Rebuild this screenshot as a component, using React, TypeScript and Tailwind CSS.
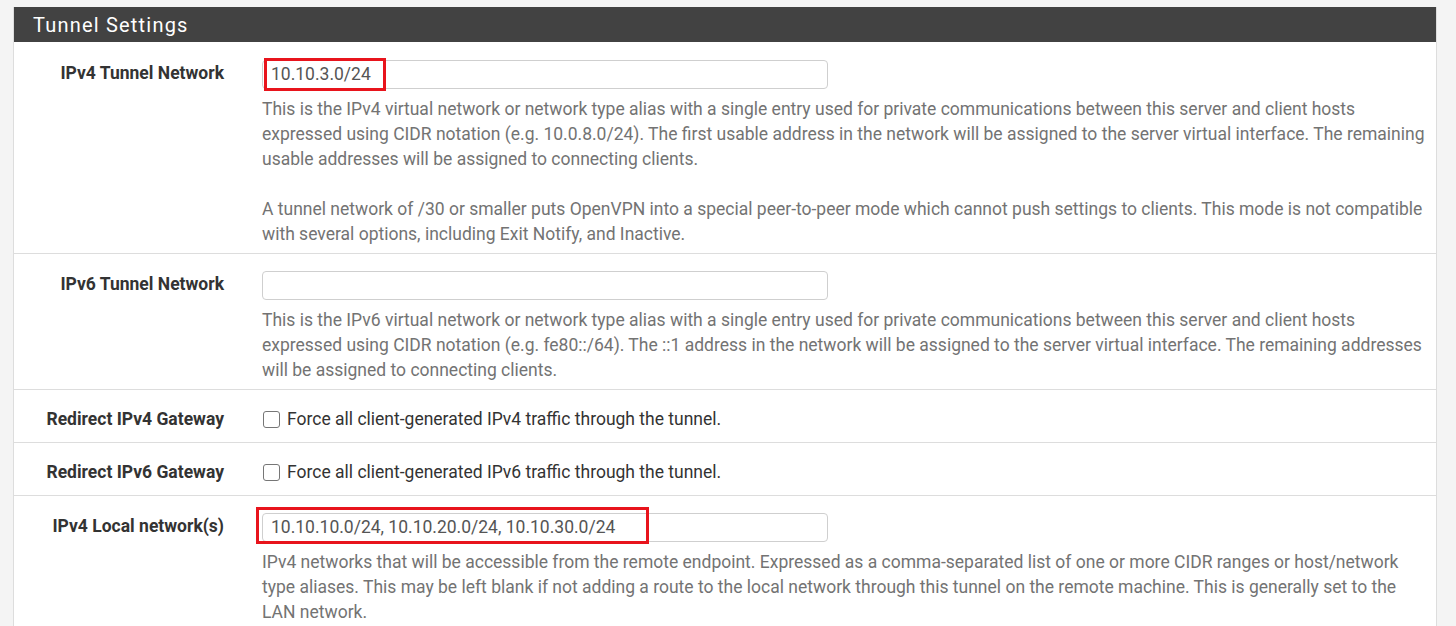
const font = { fontFamily: "Roboto, 'Liberation Sans', sans-serif" };

function Label({ children }: { children: React.ReactNode }) {
  return (
    <div className="w-[225px] shrink-0 pr-[15px] pt-[1px] text-right text-[17.5px] font-bold leading-[25px] text-[#333]">
      {children}
    </div>
  );
}

function TextInput({ value }: { value?: string }) {
  return (
    <div className="flex h-[29px] w-[566px] items-center rounded-[4px] border border-[#cfcfcf] bg-white pl-[8px] text-[17.5px] text-[#555]">
      {value}
    </div>
  );
}

function Help({ children }: { children: React.ReactNode }) {
  return <div className="mt-[8px] text-[17.5px] leading-[25px] text-[#737373]">{children}</div>;
}

function CheckRow({ label, text }: { label: string; text: string }) {
  return (
    <div className="flex border-t border-[#ddd] pt-[16px] pb-[10px]">
      <Label>{label}</Label>
      <div className="flex items-center pl-[23px] pt-[1px] text-[17.5px] leading-[25px] text-[#333]">
        <span className="mr-[7px] ml-[1px] inline-block h-[17px] w-[17px] rounded-[3px] border border-[#767676] bg-white" />
        {text}
      </div>
    </div>
  );
}

export default function App() {
  return (
    <div className="h-[626px] overflow-hidden bg-[#f4f4f4] pt-[7px] pl-[13px]" style={font}>
      <div className="w-[1424px] border-x border-[#ddd] bg-white">
        <div className="flex h-[35px] items-center bg-[#424242] pl-[19px] text-[20px] tracking-[1.2px] text-white">
          Tunnel Settings
        </div>

        <div className="flex pt-[18px] pb-[6px]">
          <Label>IPv4 Tunnel Network</Label>
          <div className="flex-1 pl-[23px] pr-[7px]">
            <div className="relative">
              <TextInput value="10.10.3.0/24" />
              <div className="absolute top-[-2px] left-[2px] h-[33px] w-[122px] border-[3px] border-[#e8141c]" />
            </div>
            <Help>
              This is the IPv4 virtual network or network type alias with a single entry used for private communications between this server and client hosts expressed using CIDR notation (e.g. 10.0.8.0/24). The first usable address in the network will be assigned to the server virtual interface. The remaining usable addresses will be assigned to connecting clients.
              <br />
              <br />
              A tunnel network of /30 or smaller puts OpenVPN into a special peer-to-peer mode which cannot push settings to clients. This mode is not compatible with several options, including Exit Notify, and Inactive.
            </Help>
          </div>
        </div>

        <div className="flex border-t border-[#ddd] pt-[17px] pb-[6px]">
          <Label>IPv6 Tunnel Network</Label>
          <div className="flex-1 pl-[23px] pr-[7px]">
            <TextInput />
            <Help>
              This is the IPv6 virtual network or network type alias with a single entry used for private communications between this server and client hosts expressed using CIDR notation (e.g. fe80::/64). The ::1 address in the network will be assigned to the server virtual interface. The remaining addresses will be assigned to connecting clients.
            </Help>
          </div>
        </div>

        <CheckRow label="Redirect IPv4 Gateway" text="Force all client-generated IPv4 traffic through the tunnel." />
        <CheckRow label="Redirect IPv6 Gateway" text="Force all client-generated IPv6 traffic through the tunnel." />

        <div className="flex border-t border-[#ddd] pt-[17px] pb-[8px]">
          <Label>IPv4 Local network(s)</Label>
          <div className="flex-1 pl-[23px] pr-[7px]">
            <div className="relative">
              <TextInput value="10.10.10.0/24, 10.10.20.0/24, 10.10.30.0/24" />
              <div className="absolute top-[-6px] left-[-6px] h-[37px] w-[393px] border-[3px] border-[#e8141c]" />
            </div>
            <Help>
              IPv4 networks that will be accessible from the remote endpoint. Expressed as a comma-separated list of one or more CIDR ranges or host/network type aliases. This may be left blank if not adding a route to the local network through this tunnel on the remote machine. This is generally set to the LAN network.
            </Help>
          </div>
        </div>
      </div>
    </div>
  );
}
